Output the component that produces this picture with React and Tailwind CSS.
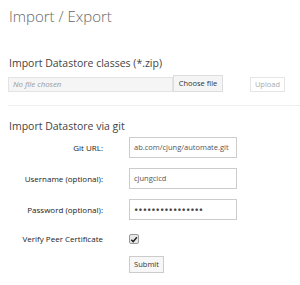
import React from "react";

const rows = [
  { label: "Git URL:", value: "ab.com/cjung/automate.git" },
  { label: "Username (optional):", value: "cjungcicd" },
  { label: "Password (optional):", value: "••••••••••••••••", secret: true },
];

function Field({ label, value, secret }) {
  return (
    <div className="flex items-center h-[21px]">
      <label className="w-[103px] text-right text-[8px] font-medium text-[#222] whitespace-nowrap">
        {label}
      </label>
      <div
        className={
          secret
            ? "ml-[26px] w-[108px] h-[21px] border border-[#ccc] bg-white flex items-center px-[4px] text-[11.5px] text-[#444] overflow-hidden whitespace-nowrap"
            : "ml-[26px] w-[108px] h-[21px] border border-[#ccc] bg-white flex items-center px-[4px] text-[7.5px] text-[#555] overflow-hidden whitespace-nowrap"
        }
      >
        {value}
      </div>
    </div>
  );
}

export default function App() {
  return (
    <div
      className="w-[300px] h-[285px] bg-white text-[#555] overflow-hidden"
      style={{ fontFamily: '"Open Sans", sans-serif' }}
    >
      <div className="pl-[9px] pt-[4px]">
        <h1 className="text-[15px] font-light leading-[24px] text-[#666]">Import / Export</h1>

        <h3 className="mt-[27px] text-[10.5px] leading-[16px] text-[#444]">
          Import Datastore classes (*.zip)
        </h3>
        <div className="mt-[4px] flex items-end -ml-[1px]">
          <div className="w-[165px] h-[15px] border border-[#e3e3e3] bg-[#f5f5f5] flex items-center px-[4px] text-[7.8px] italic text-[#999]">
            No file chosen
          </div>
          <div className="w-[50px] h-[17px] border border-[#ddd] bg-[#f5f5f5] flex items-center justify-center text-[7.5px] text-[#333]">
            Choose file
          </div>
          <div className="ml-[27px] w-[35px] h-[15px] border border-[#e5e5e5] bg-white flex items-center justify-center text-[7.5px] text-[#aaa]">
            Upload
          </div>
        </div>

        <div className="mt-[13px] -ml-[1px] border-t border-[#eee]" />

        <h3 className="mt-[12px] text-[10.5px] leading-[16px] text-[#444]">
          Import Datastore via git
        </h3>

        <div className="mt-[3px] -ml-[9px] flex flex-col gap-[10px]">
          {rows.map((r) => (
            <Field key={r.label} label={r.label} value={r.value} secret={r.secret} />
          ))}
          <div className="flex items-center mt-[2px] h-[14px]">
            <label className="w-[103px] text-right text-[8px] font-medium text-[#222] whitespace-nowrap">
              Verify Peer Certificate
            </label>
            <div className="ml-[26px] w-[10px] h-[10px] border border-[#999] rounded-[2px] bg-[#e9e9e9] flex items-center justify-center">
              <svg viewBox="0 0 10 10" className="w-[9px] h-[9px]">
                <path d="M1.5 5.2 L4 7.6 L8.6 2.2" fill="none" stroke="#222" strokeWidth="1.8" />
              </svg>
            </div>
          </div>
          <div className="flex">
            <div className="ml-[129px] w-[35px] h-[17px] border border-[#ccc] bg-[#f7f7f7] flex items-center justify-center text-[7.5px] text-[#333]">
              Submit
            </div>
          </div>
        </div>
      </div>
    </div>
  );
}
